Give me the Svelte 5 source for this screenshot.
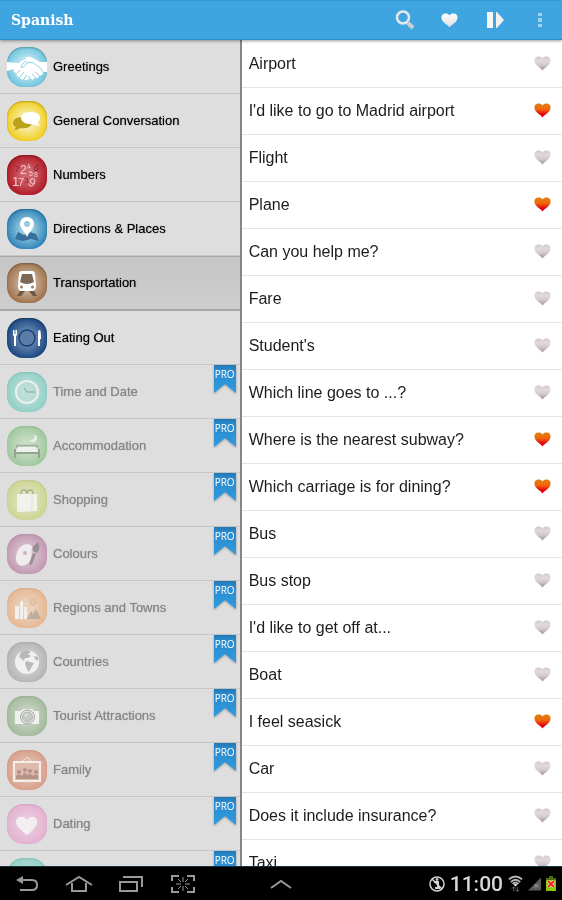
<script>
  const categories = [
    { name: 'Greetings', icon: 'handshake', inner: '#cdeaf3', outer: '#5cbedb' },
    { name: 'General Conversation', icon: 'chat', inner: '#f6eeb8', outer: '#f1c800' },
    { name: 'Numbers', icon: 'digits', inner: '#cf626a', outer: '#a90d19' },
    { name: 'Directions & Places', icon: 'pin', inner: '#9ccbe0', outer: '#1878b2' },
    { name: 'Transportation', icon: 'train', inner: '#cdb49c', outer: '#976840' },
    { name: 'Eating Out', icon: 'plate', inner: '#6c8db6', outer: '#0b3a76' },
    { name: 'Time and Date', icon: 'clock', pro: true, inner: '#bfded9', outer: '#87cdc3' },
    { name: 'Accommodation', icon: 'bed', pro: true, inner: '#cbdcc6', outer: '#97c596' },
    { name: 'Shopping', icon: 'bag', pro: true, inner: '#dee2c0', outer: '#c9d388' },
    { name: 'Colours', icon: 'palette', pro: true, inner: '#d9c3cf', outer: '#bf91ac' },
    { name: 'Regions and Towns', icon: 'town', pro: true, inner: '#ead2bd', outer: '#e6b48a' },
    { name: 'Countries', icon: 'globe', pro: true, inner: '#d2d2d2', outer: '#b0b0b0' },
    { name: 'Tourist Attractions', icon: 'camera', pro: true, inner: '#cad3c6', outer: '#9bb693' },
    { name: 'Family', icon: 'picture', pro: true, inner: '#e2c0b4', outer: '#d89a84' },
    { name: 'Dating', icon: 'love', pro: true, inner: '#e8cbdc', outer: '#e3acce' },
    { name: 'Emergency', icon: 'none', pro: true, inner: '#bfded9', outer: '#87cdc3' }
  ];

  let selected = $state('Transportation');

  let phrases = $state([
    { text: 'Airport', liked: false },
    { text: "I'd like to go to Madrid airport", liked: true },
    { text: 'Flight', liked: false },
    { text: 'Plane', liked: true },
    { text: 'Can you help me?', liked: false },
    { text: 'Fare', liked: false },
    { text: "Student's", liked: false },
    { text: 'Which line goes to ...?', liked: false },
    { text: 'Where is the nearest subway?', liked: true },
    { text: 'Which carriage is for dining?', liked: true },
    { text: 'Bus', liked: false },
    { text: 'Bus stop', liked: false },
    { text: "I'd like to get off at...", liked: false },
    { text: 'Boat', liked: false },
    { text: 'I feel seasick', liked: true },
    { text: 'Car', liked: false },
    { text: 'Does it include insurance?', liked: false },
    { text: 'Taxi', liked: false }
  ]);
</script>

{#snippet glyph(name)}
  <svg width="40" height="40" viewBox="0 0 40 40" aria-hidden="true">
    {#if name === 'handshake'}
      <path d="M0 15L11 16C14 12 19 9 24 10L33 15H40V25H36C36 28 34 29 32 28C32 31 30 32 28 30C27 33 25 33 23 31C21 33 18 34 17 32C15 33 13 32 13 30C10 30 9 28 10 26C7 26 6 24 7 22L0 24Z" fill="#fff" />
      <path d="M11 16Q15 12 19 11M14 21Q18 20 20 16Q26 14 29 18Q34 20 36 25M14 21Q15 15 20 14M32 28L28 25M28 30L25 27M23 31L21 29M10 26L13 23M13 30L17 25M17 32L20 28" fill="none" stroke="#8fd0e3" />
    {:else if name === 'chat'}
      <path d="M15 16C9 16 6 19 6 22C6 24 7 25 9 26L7 29C10 29 12 28 13 27C18 28 23 27 25 23C20 23 15 20 15 16Z" fill="#b9a11c" />
      <path d="M24 11C30 11 33 14 33 17C33 19 32 20 31 21C31 23 32 24 33 25C30 25 28 24 27 23C20 24 14 21 14 17C14 13 18 11 24 11Z" fill="#fff" />
    {:else if name === 'digits'}
      <g font-family="Liberation Sans, sans-serif" fill="#f3c9cb">
        <text x="13" y="19" font-size="12">2</text>
        <text x="20" y="14" font-size="7" transform="rotate(-20 22 12)">4</text>
        <text x="27" y="16" font-size="9" transform="rotate(30 29 13)" fill="#7f1f25">6</text>
        <text x="8" y="17" font-size="8" transform="rotate(12 10 14)" fill="#7f1f25">7</text>
        <text x="5" y="31" font-size="13">1</text>
        <text x="11" y="31" font-size="11">7</text>
        <text x="17" y="28" font-size="8" fill="#7f1f25">3</text>
        <text x="22" y="21" font-size="7">5</text>
        <text x="27" y="22" font-size="7">8</text>
        <text x="22" y="32" font-size="12" transform="rotate(25 26 27)">9</text>
      </g>
    {:else if name === 'pin'}
      <path d="M11 23L17 26L23 23L29 25L32 32L24 30L16 32L8 30Z" fill="#376f9c" />
      <path d="M20 8C24 8 27 11 27 15C27 19 22 23 20 28C18 23 13 19 13 15C13 11 16 8 20 8ZM20 12A3 3 0 1 0 20 18A3 3 0 1 0 20 12Z" fill="#fff" fill-rule="evenodd" />
    {:else if name === 'train'}
      <path d="M13 28H18L14 33H10ZM22 28H27L30 33H26Z" fill="#6b5848" />
      <path d="M15 8H25Q28 8 28 11L29 23Q29 28 25 28H15Q11 28 11 23L12 11Q12 8 15 8Z" fill="#fff" />
      <path d="M15 11H25L27 19Q20 23 13 19Z" fill="#7d6857" />
      <circle cx="14.500" cy="24" r="1.500" fill="#a17c5c" /><circle cx="25.500" cy="24" r="1.500" fill="#a17c5c" />
    {:else if name === 'plate'}
      <circle cx="20" cy="20" r="8" fill="#5b7ca8" stroke="#17406f" stroke-width="1.500" />
      <path d="M6 12V16Q6 18 7 18V28H9V18Q10 18 10 16V12H9V16H8.500V12H7.500V16H7V12ZM31 28V14Q31 12 33 12Q34 14 34 21H33V28Z" fill="#fff" />
    {:else if name === 'clock'}
      <circle cx="20" cy="20" r="11" fill="none" stroke="#eef0f0" stroke-width="2" />
      <path d="M17 16L20 20H28" fill="none" stroke="#7fa09c" />
    {:else if name === 'bed'}
      <path d="M10 22V19.500H30V22" fill="none" stroke="#a0ae9d" stroke-width="1.500" />
      <path d="M11 21H29L32 26H8Z" fill="#eef0ed" />
      <path d="M8 23V32M32 23V32M8 27H32" fill="none" stroke="#94a392" stroke-width="2" />
      <path d="M27 9C28 12 27 14 23 14C25 18 30 16 30 12C30 10 29 9 27 9Z" fill="#eef0ed" />
    {:else if name === 'bag'}
      <path d="M14 14Q14 10 17 10Q20 10 20 14Q20 10 23 10Q26 10 26 14" fill="none" stroke="#acae94" stroke-width="1.500" />
      <path d="M10 14H30V31L10 32Z" fill="#f1f2ec" /><path d="M25 14V31" stroke="#dde0c6" />
    {:else if name === 'palette'}
      <path d="M25 12C21 8 15 10 11 16C8 22 8 28 12 31C16 33 21 30 24 26Z" fill="#f0ecee" />
      <circle cx="18" cy="19" r="2" fill="#cdb0c0" />
      <path d="M31 8C33 12 33 16 30 19L27 18C24 14 26 12 31 8ZM26 19L29 20L26 28Q24 32 23 31Q22 30 23 27Z" fill="#988e93" />
    {:else if name === 'town'}
      <path d="M8 18H12V31H8ZM13 14L16 12V31H13ZM17 19H20V31H17Z" fill="#f4efea" />
      <path d="M20 31L24 23L26 26L29 21L34 31Z" fill="#bfae9d" />
      <path d="M26 10V18M22 14H30M23 11L29 17M29 11L23 17" stroke="#d6ab83" /><circle cx="26" cy="14" r="2" fill="#e8c6a8" />
    {:else if name === 'globe'}
      <circle cx="20" cy="20" r="12" fill="#f0f0f0" />
      <path d="M14 10Q16 8 21 8L24 10L21 12L24 14L21 16L18 16L17 19L12 15ZM19 19L27 21L24 26L22 30L20 27L18 22ZM27 14L31 15V19L28 17Z" fill="#b9b9b9" />
    {:else if name === 'camera'}
      <path d="M8 15H14L16 13H25L27 15H32V28H8Z" fill="#eff1ee" />
      <circle cx="20.500" cy="21" r="7" fill="#e6e8e5" stroke="#a0a69d" /><circle cx="20.500" cy="21" r="5" fill="#c6cac4" stroke="#b0b5ad" />
      <path d="M18 21Q18 18 21 18" fill="none" stroke="#eee" />
    {:else if name === 'picture'}
      <path d="M16 11L20 7L24 11" fill="none" stroke="#eee2dd" />
      <rect x="7" y="12" width="26" height="19" fill="#dfb9ac" stroke="#f2eeec" stroke-width="2" />
      <g fill="#b29489"><circle cx="12" cy="22" r="2" /><circle cx="18" cy="20" r="2" /><circle cx="23" cy="21" r="2" /><circle cx="29" cy="22" r="2" />
        <path d="M9 29V26Q12 23 15 26Q18 20 20 25Q23 22 26 26Q29 23 31 26V29Z" /></g>
    {:else if name === 'love'}
      <path d="M20 31C14 26 9 22 9 18C9 12 17 11 20 16C23 11 30 12 30 18C30 22 26 26 20 31Z" fill="#f3eff1" />
    {/if}
  </svg>
{/snippet}

{#snippet heart(fill)}
  <svg width="17" height="15" viewBox="0 0 17 15" aria-hidden="true">
    <path d="M8.500 14.500C7.500 12.500 5 11.500 2.500 9C-0.500 6 -0.500 0.500 4.500 0.500C6.500 0.500 7.500 1 8.500 2.500C9.500 1 10.500 0.500 12.500 0.500C17.500 0.500 17.500 6 14.500 9C12 11.500 9.500 12.500 8.500 14.500Z" fill={fill} />
  </svg>
{/snippet}

<svg class="defs" aria-hidden="true">
  <defs>
    <linearGradient id="white" x1="0" y1="0" x2="0" y2="1"><stop offset="0" stop-color="#fff" /><stop offset="1" stop-color="#dcdcdc" /></linearGradient>
    <linearGradient id="pale" x1="0" y1="0" x2="0" y2="1"><stop offset="0" stop-color="#d3c9c9" /><stop offset="0.300" stop-color="#e2d9da" /><stop offset="0.600" stop-color="#d5cacb" /><stop offset="1" stop-color="#9c9091" /></linearGradient>
    <linearGradient id="hot" x1="0" y1="0" x2="0" y2="1"><stop offset="0" stop-color="#e0800c" /><stop offset="0.400" stop-color="#f0680c" /><stop offset="0.800" stop-color="#e3000f" /></linearGradient>
    <linearGradient id="ribbon" x1="0" y1="0" x2="0" y2="1"><stop offset="0" stop-color="#2278b5" /><stop offset="0.150" stop-color="#2a88c8" /><stop offset="1" stop-color="#2f9ce3" /></linearGradient>
  </defs>
</svg>

<div class="screen">
  <header>
    <h1>Spanish</h1>
    <button aria-label="Search">
      <svg width="20" height="20" viewBox="0 0 20 20"><circle cx="8" cy="7.500" r="6" fill="none" stroke="#e6e9eb" stroke-width="2.500" /><path d="M13 13L18 18" stroke="#c9ced1" stroke-width="4" /></svg>
    </button>
    <button aria-label="Favourites">{@render heart('url(#white)')}</button>
    <button aria-label="Play all">
      <svg width="18" height="18" viewBox="0 0 18 18"><path d="M1 1H7V17H1Z" fill="#f6f6f6" /><path d="M10 1H11L18 9L11 17H10Z" fill="#f0f0f0" /></svg>
    </button>
    <button aria-label="More options">
      <svg width="4" height="16" viewBox="0 0 4 16" fill="#a3cfea"><path d="M0 1H4V4H0ZM0 6H4V10H0ZM0 12H4V15H0Z" /></svg>
    </button>
  </header>

  <div class="panes">
    <nav aria-label="Categories">
      {#each categories as c}
        <button class="category" class:pro={c.pro} class:selected={selected === c.name} aria-label={c.name} onclick={() => (selected = c.name)}>
          <span class="icon" style="--inner: {c.inner}; --outer: {c.outer}">{@render glyph(c.icon)}</span>
          {#if c.icon !== 'none'}<span>{c.name}</span>{/if}
          {#if c.pro}
            <span class="ribbon">
              <svg width="22" height="28" viewBox="0 0 22 28" aria-hidden="true"><path d="M0 0H22V28L11 19L0 28Z" fill="url(#ribbon)" /></svg>
              <span class="tag">PRO</span>
            </span>
          {/if}
        </button>
      {/each}
    </nav>

    <main>
      <ul>
        {#each phrases as p}
          <li>
            <span>{p.text}</span>
            <button aria-label="Favourite" aria-pressed={p.liked} onclick={() => (p.liked = !p.liked)}>
              {@render heart(p.liked ? 'url(#hot)' : 'url(#pale)')}
            </button>
          </li>
        {/each}
      </ul>
    </main>
  </div>

  <footer>
    <div class="keys">
      <button aria-label="Back">
        <svg width="24" height="18" viewBox="0 0 24 18"><path d="M7 5H17Q22 5 22 10Q22 15 17 15H5" fill="none" stroke="#999" stroke-width="2" /><path d="M1 5L8 1V9Z" fill="#999" /></svg>
      </button>
      <button aria-label="Home">
        <svg width="28" height="18" viewBox="0 0 28 18" fill="none" stroke="#999" stroke-width="2"><path d="M1 10L14 2L27 10M7 8V16H21V8" /></svg>
      </button>
      <button aria-label="Recent apps">
        <svg width="26" height="18" viewBox="0 0 26 18" fill="none" stroke="#999" stroke-width="2"><path d="M2 7H19V16H2ZM5 2H24V12" /></svg>
      </button>
      <button aria-label="Screen capture">
        <svg width="24" height="18" viewBox="0 0 24 18" fill="none" stroke="#999" stroke-width="2"><path d="M1 6V1H8M16 1H23V6M23 12V17H16M8 17H1V12" /><path d="M12 2V7M12 11V16M5 9H10M14 9H19M7 4L10 7M17 4L14 7M7 14L10 11M17 14L14 11" stroke-width="1" /></svg>
      </button>
    </div>
    <button aria-label="Show tray">
      <svg width="22" height="10" viewBox="0 0 22 10" fill="none" stroke="#999" stroke-width="2"><path d="M1 9L11 2L21 9" /></svg>
    </button>
    <div class="status">
      <svg width="16" height="16" viewBox="0 0 16 16" fill="none" stroke="#d4d4d4"><circle cx="8" cy="8" r="7" stroke-width="1.500" /><path d="M5 6H9V12M6 12H11" stroke-width="2" /><circle cx="8" cy="3.500" r="1" fill="#d4d4d4" /><path d="M3 3L13 13" stroke-width="1.500" /></svg>
      <time>11:00</time>
      <svg width="15" height="18" viewBox="0 0 16 18" fill="none" stroke="#b5b5b5" stroke-width="2"><path d="M1 4Q8 -2 15 4M3 7Q8 2 13 7M5 9Q8 6 11 9" /><path d="M6 9.500Q8 8 10 9.500L8 12Z" fill="#ddd" stroke="none" /><path d="M6 17V12M4 14L6 12L8 14M10 12V17M8 15L10 17L12 15" stroke="#666" stroke-width="1" /></svg>
      <svg width="13" height="14" viewBox="0 0 14 14"><path d="M0 14L14 0V14Z" fill="#5c5c5c" /><path d="M7 7L11 11M11 7L7 11" stroke="#aaa" /></svg>
      <svg width="10" height="15" viewBox="0 0 10 15"><path d="M3 0H7V2H10V15H0V2H3Z" fill="#8cc800" /><path d="M3 0H7V2H10V4H0V2H3Z" fill="#4c6a10" /><path d="M2 5L8 11M8 5L2 11" stroke="#fff" stroke-width="3" /><path d="M2 5L8 11M8 5L2 11" stroke="#f02020" stroke-width="2" /></svg>
    </div>
  </footer>
</div>

<style>
  :global(body) { margin: 0; }
  .defs { position: absolute; width: 0; height: 0; }
  button {
    border: 0;
    padding: 0;
    margin: 0;
    background: none;
    color: inherit;
    font: inherit;
    cursor: pointer;
  }
  svg { display: block; }

  .screen {
    display: flex;
    flex-direction: column;
    height: 100vh;
    overflow: hidden;
    font-family: "Liberation Sans", Arial, sans-serif;
    background: #fff;
  }
  header {
    display: flex;
    flex: none;
    height: 40px;
    box-sizing: border-box;
    border-top: 1px solid #3896d0;
    border-bottom: 1px solid #2f8bc4;
    padding-left: 11px;
    align-items: center;
    background: #3ea5e1;
    color: #fff;
    position: relative;
    box-shadow: 0 1px 3px rgba(0, 0, 0, 0.4);
  }
  h1 {
    flex: 1;
    margin: 0;
    font: bold 14px/20px "DejaVu Serif", serif;
  }
  header button {
    display: grid;
    place-items: center;
    width: 45px;
    height: 38px;
  }

  .panes { display: flex; flex: 1; min-height: 0; }
  nav, main { overflow-y: auto; scrollbar-width: none; }
  nav {
    width: 43%;
    box-sizing: border-box;
    border-right: 2px solid #858585;
    background: #dedede;
  }
  main { flex: 1; }

  .category {
    position: relative;
    display: flex;
    align-items: center;
    gap: 6px;
    width: 100%;
    height: 54px;
    padding-left: 7px;
    border-bottom: 1px solid #c6c6c6;
    font-size: 13px;
    line-height: 16px;
    text-align: left;
    text-shadow: 0 0 1px rgba(0, 0, 0, 0.6);
    color: #000;
  }
  .category.pro {
    color: #868686;
    text-shadow: 0 0 1px rgba(134, 134, 134, 0.8);
  }
  .category.selected {
    height: 55px;
    border-top: 1px solid #a8a8a8;
    border-bottom: 2px solid #a8a8a8;
    background: linear-gradient(#c5c5c5, #cecece);
  }
  .icon {
    width: 40px;
    height: 40px;
    border-radius: 16px;
    overflow: hidden;
    background: radial-gradient(circle, var(--inner) 20%, var(--outer) 85%);
    box-shadow: inset 0 1px 2px rgba(0, 0, 0, 0.25);
    text-shadow: none;
  }
  .pro .icon { box-shadow: inset 0 1px 2px rgba(0, 0, 0, 0.08); }
  .ribbon {
    position: absolute;
    top: 0;
    right: 4px;
    width: 22px;
    filter: drop-shadow(0 1px 1px rgba(0, 0, 0, 0.3));
    text-shadow: none;
  }
  .tag {
    position: absolute;
    inset: 3px 0 auto;
    font: 10px/12px "Open Sans", sans-serif;
    text-align: center;
    color: #fff;
  }

  ul { list-style: none; margin: 0; padding: 1px 0 0; }
  li {
    display: flex;
    align-items: center;
    justify-content: space-between;
    height: 47px;
    box-sizing: border-box;
    border-bottom: 1px solid #e4e4e4;
    padding: 0 11px 0 7px;
    font-size: 16px;
    line-height: 20px;
    color: #1c1c1c;
  }
  li button { padding-bottom: 2px; }

  footer {
    display: grid;
    grid-template-columns: 1fr auto 1fr;
    align-items: center;
    flex: none;
    height: 34px;
    box-sizing: border-box;
    border-top: 1px solid #14303f;
    background: #000;
  }
  .keys { display: flex; padding-left: 1px; }
  .keys button { display: grid; place-items: center; width: 52px; height: 33px; }
  .status {
    display: flex;
    align-items: center;
    justify-content: flex-end;
    gap: 5px;
    padding-right: 6px;
  }
  time { font: 500 21px/24px Roboto, sans-serif; color: #d8d8d8; }
</style>
